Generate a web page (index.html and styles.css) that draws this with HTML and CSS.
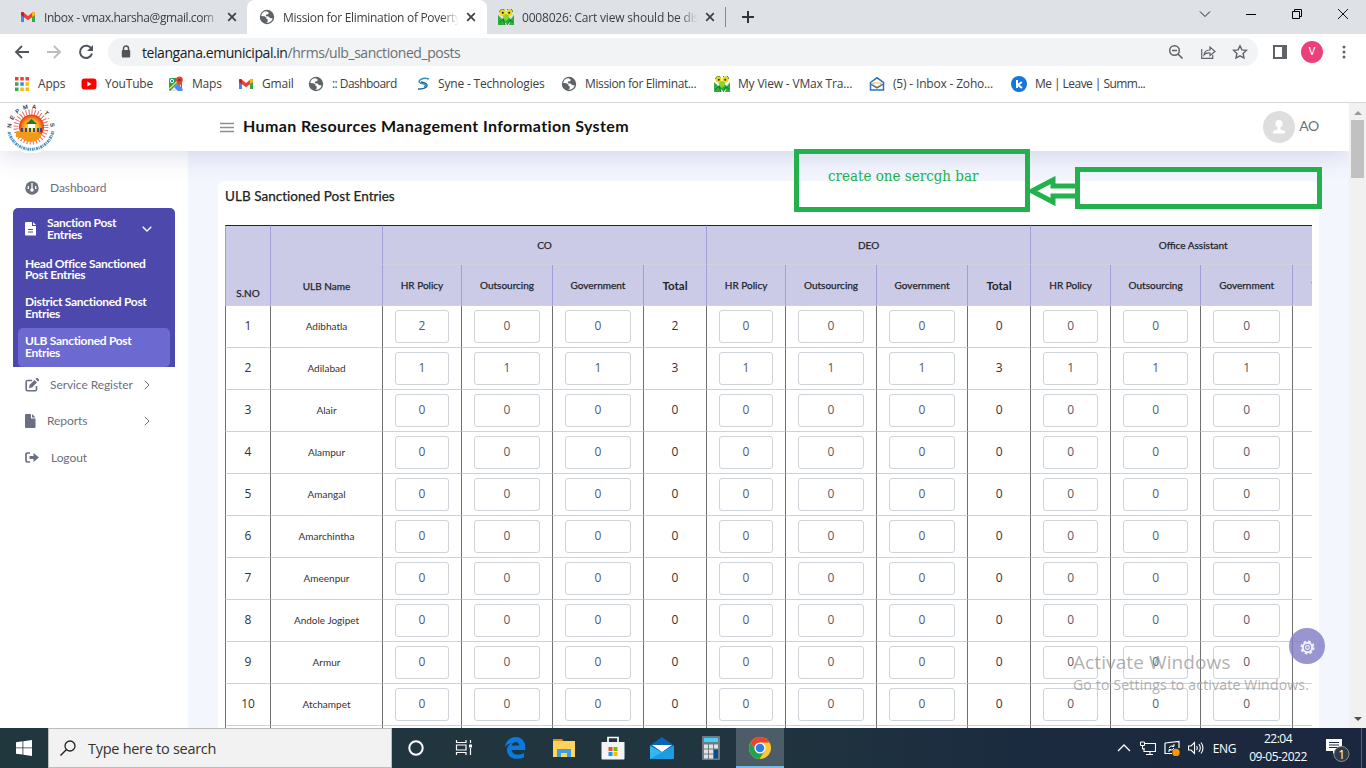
FILE: index.html
```html
<!DOCTYPE html>
<html lang="en">
<head>
<meta charset="utf-8">
<title>Human Resources Management Information System</title>
<link rel="stylesheet" href="styles.css">
</head>
<body>
<svg class="defs" width="0" height="0">
  <symbol id="gmail" viewBox="0 0 16 16"><path d="M1 4v9h3V6z" fill="#4285f4"/><path d="M12 6v7h3V4z" fill="#34a853"/><path d="M1 4.2Q1 2.5 3 3l5 4 5-4q2-.5 2 1.200V6l-7 5.200L1 6z" fill="#ea4335"/><path d="M12 4l1-1q2-.5 2 1.200V6l-3 2z" fill="#fbbc04"/><path d="M1 4.200Q1 2.500 3 3l1 .8V8L1 6z" fill="#c5221f"/></symbol>
  <symbol id="globe" viewBox="0 0 16 16"><circle cx="8" cy="8" r="7.200" fill="#5f6368"/><path d="M7.500 2.200C5 2 2.600 4 2.200 7l3.300.2 2.200 1.500-.4 1.300 1.500.3-.2 2.200-1.200 1.300c3 .4 5.500-1.600 6.300-4.300L11 9 9.500 7.500 7 7.200l-.2-1.400L9.500 5V3.200z" fill="#fff"/></symbol>
  <symbol id="mantis" viewBox="0 0 16 16"><path d="M0 6l4 4 3-2h3l3 2 3-4v10h-5l1-3-3 2-3-2 1 3H0z" fill="#2fae3a"/><path d="M4 5h8l-2 5-2 2-2-2z" fill="#8fd52b"/><path d="M1 14l4-4 2 6M15 13l-3-2-3 5" stroke="#0c7d36" fill="none"/><circle cx="4.500" cy="3.500" r="3" fill="#f2d90b"/><circle cx="11.500" cy="3.500" r="3" fill="#f2d90b"/><path d="M1.500 3a3 3 0 0 1 5-2M9 1a3 3 0 0 1 5.500 2" stroke="#4d9c22" fill="none"/><circle cx="4.800" cy="3.800" r="1" fill="#222"/><circle cx="11.200" cy="3.800" r="1" fill="#222"/></symbol>
  <symbol id="x" viewBox="0 0 10 10"><path d="M1.200 1.200l7.600 7.600M8.800 1.200L1.200 8.800" stroke="#3c4043" stroke-width="1.700"/></symbol>
</svg>

<header class="tabs">
  <div class="tab tab-first"><svg class="fav"><use href="#gmail"/></svg><span class="tab-title seg">Inbox - vmax.harsha@gmail.com</span><svg class="close"><use href="#x"/></svg></div>
  <div class="tab tab-active"><svg class="fav"><use href="#globe"/></svg><span class="tab-title seg">Mission for Elimination of Poverty</span><svg class="close"><use href="#x"/></svg></div>
  <div class="tab tab-third"><svg class="fav"><use href="#mantis"/></svg><span class="tab-title seg">0008026: Cart view should be dis</span><svg class="close"><use href="#x"/></svg></div>
  <svg class="plus" viewBox="0 0 12 12"><path d="M6 0v12M0 6h12" stroke="#333" stroke-width="2"/></svg>
  <div class="win">
    <svg viewBox="0 0 12 12"><path d="M1 3.500l5 5 5-5" fill="none" stroke="#222"/></svg>
    <svg viewBox="0 0 12 12"><path d="M1 6.500h10" stroke="#000"/></svg>
    <svg viewBox="0 0 12 12"><path d="M1.500 3.500h7v7h-7zM3.500 3.500v-2h7v7h-2" fill="none" stroke="#000"/></svg>
    <svg viewBox="0 0 12 12"><path d="M1 1l10 10M11 1L1 11" stroke="#111"/></svg>
  </div>
</header>

<div class="toolbar">
  <svg class="nav" viewBox="0 0 16 16"><path d="M15 8H2M8 2L2 8l6 6" fill="none" stroke="#50555a" stroke-width="1.800"/></svg>
  <svg class="nav" viewBox="0 0 16 16"><path d="M1 8h13M8 2l6 6-6 6" fill="none" stroke="#bbbdbf" stroke-width="1.800"/></svg>
  <svg class="nav" viewBox="0 0 16 16"><path d="M13.500 5A6.100 6.100 0 1 0 14 9.500" fill="none" stroke="#50555a" stroke-width="2"/><path d="M15 1v6H9z" fill="#50555a"/></svg>
  <div class="omni">
    <svg class="lock" viewBox="0 0 10 14"><path d="M2.500 6V3.500a2.500 2.500 0 0 1 5 0V6" fill="none" stroke="#50555a" stroke-width="1.500"/><rect x=".8" y="5" width="8.400" height="7.500" rx="1" fill="#50555a"/></svg>
    <span class="url seg"><b>telangana.emunicipal.in</b>/hrms/ulb_sanctioned_posts</span>
    <svg class="oi" viewBox="0 0 16 16"><circle cx="6.500" cy="6.500" r="4.800" fill="none" stroke="#5f6368" stroke-width="1.500"/><path d="M10 10l4.500 4.500M4 6.500h5" stroke="#5f6368" stroke-width="1.700"/></svg>
    <svg class="oi" viewBox="0 0 16 16"><path d="M1.700 5v9.300h11V11M4 11q.5-5 6-5V3l5 4.500-5 4V9Q6 8.500 4 11z" fill="none" stroke="#5f6368" stroke-width="1.200"/></svg>
    <svg class="oi" viewBox="0 0 16 16"><path d="M8 1.800l1.900 4.100 4.500.5-3.300 3.100.9 4.500L8 11.800 4 14l.9-4.500L1.600 6.400l4.500-.5z" fill="none" stroke="#5f6368" stroke-width="1.400"/></svg>
  </div>
  <svg class="side" viewBox="0 0 14 14"><path d="M1 1h12v12H1z" fill="#fff" stroke="#5f6368" stroke-width="2"/><path d="M9 0h5v14H9z" fill="#5f6368"/></svg>
  <span class="profile">V</span>
  <svg class="dots" viewBox="0 0 4 14"><circle cx="2" cy="2" r="1.500"/><circle cx="2" cy="7" r="1.500"/><circle cx="2" cy="12" r="1.500"/></svg>
</div>

<nav class="bookmarks seg">
  <a><svg viewBox="0 0 16 16"><path d="M1 1h3.500v3.500H1zM6.300 1h3.500v3.500H6.300zM11.500 1H15v3.500h-3.500z" fill="#ea4335"/><path d="M1 6.300h3.500v3.500H1z" fill="#34a853"/><path d="M6.300 6.300h3.500v3.500H6.300z" fill="#4285f4"/><path d="M11.500 6.300H15v3.500h-3.500zM11.500 11.500H15V15h-3.500zM6.300 11.500h3.500V15H6.300z" fill="#fbbc04"/><path d="M1 11.500h3.500V15H1z" fill="#34a853"/></svg>Apps</a>
  <a><svg viewBox="0 0 16 16"><rect x=".5" y="2.500" width="15" height="11" rx="3" fill="#f00"/><path d="M6.300 5.500v5l4.200-2.500z" fill="#fff"/></svg>YouTube</a>
  <a><svg viewBox="0 0 16 16"><rect x="1" y="2" width="13" height="13" rx="1.500" fill="#1fa15d"/><path d="M2 15L13 4v9q0 2-2 2z" fill="#dfe3e6"/><path d="M6 11l4-4 5 7-1 1h-4z" fill="#4c8bf5"/><path d="M1 13L13 2" stroke="#ffd24c" stroke-width="1.500"/><circle cx="4" cy="5" r="1.700" fill="none" stroke="#fff"/><path d="M11.500 10Q8 6 8.200 3.800a3.300 3.300 0 0 1 6.600 0Q15 6 11.500 10z" fill="#e84335"/><circle cx="11.500" cy="4" r="1.200" fill="#87271e"/></svg>Maps</a>
  <a><svg><use href="#gmail"/></svg>Gmail</a>
  <a class="tight"><svg><use href="#globe"/></svg>:: Dashboard</a>
  <a><svg viewBox="0 0 16 16"><path d="M13 3Q7 1 4 4t4 4q3 1 0 3" fill="none" stroke="#2b93b8" stroke-width="1.500"/><path d="M5 6q7 1 6 4t-9 3" fill="none" stroke="#275c91" stroke-width="1.300"/></svg><span class="syne">Syne - Technologies</span></a>
  <a class="mid"><svg><use href="#globe"/></svg>Mission for Eliminat...</a>
  <a><svg><use href="#mantis"/></svg>My View - VMax Tra...</a>
  <a><svg viewBox="0 0 16 16"><path d="M1.500 6.500L8 1.800l6.500 4.700v7.500h-13z" fill="#fff" stroke="#2f6fc0" stroke-width="1.500"/><path d="M4 7h8v2l-4 2-4-2z" fill="none" stroke="#f1b24a" stroke-width="1.200"/><path d="M1.500 8L8 12l6.500-4" fill="none" stroke="#2f6fc0" stroke-width="1.300"/></svg>(5) - Inbox - Zoho...</a>
  <a class="tight"><svg viewBox="0 0 16 16"><circle cx="8" cy="8" r="8" fill="#1476dc"/><path d="M6 4v8M10.800 6L7 9l4 3" fill="none" stroke="#fff" stroke-width="2"/></svg>Me | Leave | Summ...</a>
</nav>

<div class="viewport">
  <div class="app">
    <div class="topbar">
      <svg class="logo" viewBox="0 0 50 50">
        <circle cx="25" cy="26" r="24.500" fill="#fff"/>
        <circle cx="25" cy="24" r="15" fill="none" stroke="#f26a62" stroke-width="5" stroke-dasharray="1 1.950"/>
        <radialGradient id="sun"><stop offset=".2" stop-color="#ffe52e"/><stop offset=".65" stop-color="#fb9a1a"/><stop offset="1" stop-color="#e7321b"/></radialGradient>
        <circle cx="25.500" cy="24" r="12.500" fill="url(#sun)"/>
        <path d="M20 21l5.500-5 5.500 5z" fill="#187a35"/><path d="M22 21h7v4h-7z" fill="#fff"/>
        <path d="M16 29v-4M20 29v-4M24 29v-4M28 29v-4M32 29v-4M35 29v-4" stroke="#314a80" stroke-width="2"/>
        <path d="M10 29q10-1 17 1l9 1q-2 7-11 8-6 0-9-4l-6-1z" fill="#f09a19"/>
        <path d="M3 29a22.500 22.500 0 0 0 44-1" fill="none" stroke="#5294c9" stroke-width="3" stroke-dasharray="2 .6 1 .8"/>
        <path id="arc" d="M5.500 25a19.500 19.500 0 0 1 39 0" fill="none"/>
        <text class="logo-text"><textPath href="#arc" textLength="60">NEPMA.T.S</textPath></text>
      </svg>
      <svg class="burger" viewBox="0 0 14 11"><path d="M0 1.500h14M0 5.500h14M0 9.500h14" stroke="#8d8f94" stroke-width="1.500"/></svg>
      <h1>Human Resources Management Information System</h1>
      <svg class="avatar" viewBox="0 0 32 32"><circle cx="16" cy="16" r="16" fill="#dedede"/><circle cx="16" cy="12.500" r="3.600" fill="#fff"/><path d="M14.500 15h3v3.500l4.500 1.500v2.500H10V20l4.500-1.500z" fill="#fff"/></svg>
      <span class="user">AO</span>
    </div>
    <div class="body">
      <aside class="menu">
        <a class="item dash"><svg viewBox="0 0 14 14"><circle cx="7" cy="7" r="6.700" fill="#6b7080"/><path d="M7 2v6M3.300 5v3M10.700 5v3" stroke="#fff" stroke-width="1.300"/><circle cx="7" cy="9" r="1.800" fill="#fff"/></svg><span>Dashboard</span></a>
        <div class="group">
          <a class="ghead"><svg viewBox="0 0 11 14"><path d="M1 0h6v4h4v9.500H1q-1 0-1-1V1q0-1 1-1z" fill="#fff"/><path d="M8 0l3 3H8z" fill="#fff"/><path d="M3 7.500h5M3 10h5" stroke="#4d49ac"/></svg><span>Sanction Post<br>Entries</span><svg class="chev" viewBox="0 0 10 6"><path d="M.7.700L5 5 9.300.7" fill="none" stroke="#fff" stroke-width="1.300"/></svg></a>
          <a class="sub">Head Office Sanctioned<br>Post Entries</a>
          <a class="sub">District Sanctioned Post<br>Entries</a>
          <a class="sub sub-active">ULB Sanctioned Post<br>Entries</a>
        </div>
        <a class="item service"><svg viewBox="0 0 14 14"><path d="M7 2.500H2.500q-1.300 0-1.300 1.300v7.700q0 1.300 1.300 1.300h7.700q1.300 0 1.300-1.300V8" fill="none" stroke="#6b7080" stroke-width="1.600"/><path d="M4 10l.5-3 5-5 2.500 2.500-5 5zM10.500 1l1-1q.5-.3 1 0L14 1.500q.3.500 0 1l-1 1z" fill="#6b7080"/></svg><span>Service Register</span><svg class="arrow" viewBox="0 0 6 10"><path d="M.8.800L5 5 .8 9.200" fill="none" stroke="#6b7080"/></svg></a>
        <a class="item reports"><svg viewBox="0 0 14 14"><path d="M1 0h5v4.500h4.500V13q0 1-1 1H1q-1 0-1-1V1q0-1 1-1z" fill="#6b7080"/><path d="M7 0l3.500 3.500H7z" fill="#6b7080"/></svg><span>Reports</span><svg class="arrow" viewBox="0 0 6 10"><path d="M.8.800L5 5 .8 9.200" fill="none" stroke="#6b7080"/></svg></a>
        <a class="item logout"><svg viewBox="0 0 14 14"><path d="M5 2H2.200Q1 2 1 3.200v6.600Q1 11 2.200 11H5" fill="none" stroke="#6b7080" stroke-width="1.700"/><path d="M4.500 5h4V2L14 6.500 8.500 11V8h-4z" fill="#6b7080"/></svg><span>Logout</span></a>
      </aside>
      <main class="main">
        <section class="card">
          <h2>ULB Sanctioned Post Entries</h2>
          <div class="scroller">
            <table>
              <colgroup id="cols"></colgroup>
              <thead>
                <tr class="r1"><th rowspan="2" class="sno">S.NO</th><th rowspan="2" class="ulb">ULB Name</th><th colspan="4">CO</th><th colspan="4">DEO</th><th colspan="4">Office Assistant</th></tr>
                <tr class="r2" id="sub"></tr>
              </thead>
              <tbody id="rows"></tbody>
            </table>
          </div>
        </section>
      </main>
    </div>
  </div>
  <div class="scrollbar"><svg viewBox="0 0 8 4"><path d="M0 4l4-4 4 4z" fill="#999"/></svg><i></i><svg viewBox="0 0 8 4"><path d="M0 0l4 4 4-4z" fill="#505050"/></svg></div>
</div>

<div class="gear"><svg viewBox="0 0 16 16"><circle cx="8" cy="8" r="5" fill="none" stroke="#f2f2fb" stroke-width="2.200"/><circle cx="8" cy="8" r="6.600" fill="none" stroke="#f2f2fb" stroke-width="1.800" stroke-dasharray="2.800 2.380"/><circle cx="8" cy="8" r="2" fill="none" stroke="#f2f2fb" stroke-width="1.200"/></svg></div>
<div class="watermark seg"><p class="w1">Activate Windows</p><p class="w2">Go to Settings to activate Windows.</p></div>
<div class="note note-text">create one sercgh bar</div>
<div class="note note-empty"></div>
<svg class="note-arrow" viewBox="0 0 50 30"><path d="M48 10H26V4L5 15l21 11v-6h22" fill="none" stroke="#22b14c" stroke-width="5"/></svg>

<footer class="taskbar">
  <div class="start"><svg viewBox="0 0 16 16"><path d="M0 2.200l6.500-.9v6.200H0zM7.300 1.200L16 0v7.500H7.300zM0 8.300h6.500v6.300L0 13.700zM7.300 8.300H16V16l-8.700-1.200z" fill="#fff"/></svg></div>
  <div class="search seg"><svg viewBox="0 0 16 16"><circle cx="10" cy="6" r="5" fill="none" stroke="#222" stroke-width="1.300"/><path d="M6.500 9.500L.5 15.500" stroke="#222" stroke-width="1.400"/></svg>Type here to search</div>
  <div class="tasks">
    <span><svg viewBox="0 0 24 24"><circle cx="12" cy="12" r="6.700" fill="none" stroke="#fff" stroke-width="2"/></svg></span>
    <span class="tv"><svg viewBox="0 0 24 24"><path d="M4.500 4v2.500h9.500V4M4.500 19v-2.500h9.500V19M4.500 9h9.500v5H4.500zM18.500 4v3M18.500 12v7" fill="none" stroke="#fff" stroke-width="1.200"/><path d="M17 8.500h3v3h-3z" fill="#fff"/></svg></span>
    <span><svg viewBox="0 0 24 24"><path d="M2 11C3 5 7 1 12.500 1 19 1 22.500 6 22.300 11v3H8.500c.5 5 7.500 6 12.500 3v4.300C13 25 4 22 4 14c0-3 2-6 5-7-4 .3-6 3-7 4zm6.700-1.500h7.600C16 4.800 9.500 4.800 8.700 9.500z" fill="#0a7bdc"/></svg></span>
    <span><svg viewBox="0 0 24 24"><path d="M1 3h9l1.500 2H1z" fill="#dc9400"/><path d="M1 5h22v16H1z" fill="#ffd35c"/><path d="M5 21v-8h14v8h-4v-4H9v4z" fill="#3f9de0"/></svg></span>
    <span><svg viewBox="0 0 24 24"><path d="M7 7V1.500h10V7" fill="none" stroke="#fff" stroke-width="1.700"/><path d="M.5 6h23v16.500q0 1-1 1h-21q-1 0-1-1z" fill="#f4f4f4"/><path d="M7.500 11h4v4h-4z" fill="#f25022"/><path d="M12.500 11h4v4h-4z" fill="#7fba00"/><path d="M7.500 16h4v4h-4z" fill="#00a4ef"/><path d="M12.500 16h4v4h-4z" fill="#ffb900"/></svg></span>
    <span><svg viewBox="0 0 24 24"><path d="M0 9.500L12 1l12 8.500-12 8z" fill="#0964b5"/><path d="M2 9h20l-10 7z" fill="#fff"/><path d="M0 9.500l12 7 12-7V23H0z" fill="#32b8f0"/><path d="M0 23L24 9.500V23z" fill="#1d9ce3"/></svg></span>
    <span><svg viewBox="0 0 24 24"><rect x="3" y="0" width="18" height="24" rx="1" fill="#6f7a84"/><path d="M5 2h14v4H5z" fill="#42d2f5"/><path d="M5 8.500h4v4H5zM10 8.500h4v4h-4zM15 8.500h4v4h-4zM5 13.500h4v4H5zM10 13.500h4v4h-4zM5 18.500h4v4H5zM10 18.500h4v4h-4z" fill="#e0e2e4"/><path d="M15 13.500h4v9h-4z" fill="#114a8b"/></svg></span>
    <span class="on"><svg viewBox="0 0 24 24"><circle cx="12" cy="12" r="11" fill="#fcc934"/><path d="M2.500 6.500A11 11 0 0 1 21.500 6.500H12L8 14z" fill="#ea4335"/><path d="M2.500 6.500A11 11 0 0 0 11.500 23l5-8-8-.5z" fill="#26a04b"/><circle cx="12" cy="12" r="5.600" fill="#fff"/><circle cx="12" cy="12" r="4.300" fill="#2b7de9"/></svg></span>
  </div>
  <div class="tray seg">
    <svg viewBox="0 0 16 16"><path d="M2 11l6-6 6 6" fill="none" stroke="#fff" stroke-width="1.300"/></svg>
    <svg viewBox="0 0 16 16"><path d="M5 3.500h10.500v8H4V8M10 11.500v3M6 14.500h7" fill="none" stroke="#fff" stroke-width="1.100"/><path d="M.5 2h4v3.500h-4zM2.500 5.500V9h2" fill="none" stroke="#fff"/></svg>
    <svg viewBox="0 0 16 16"><path d="M1 3l14-1.500V8M1 3v10.500h7" fill="none" stroke="#fff" stroke-width="1.200"/><path d="M5 8q1-3 5-2M10 4v2.500H8M10 8q-1 3-5 2M5 12V9.500h2" fill="none" stroke="#fff"/><circle cx="12" cy="12.500" r="3.700" fill="#ff9500"/></svg>
    <svg viewBox="0 0 16 16"><path d="M.5 6h2.500l3.500-3.500v11L3 10H.5zM8.500 6q1.500 2 0 4M10.800 4q3 4 0 8M13 2.500q4 5.500 0 11" fill="none" stroke="#fff" stroke-width="1.100"/></svg>
    <span class="lang">ENG</span>
    <span class="clock"><b>22:04</b><b>09-05-2022</b></span>
    <svg class="notif" viewBox="0 0 26 26"><path d="M1 2h16v12h-6l-3 3v-3H1z" fill="#fff"/><path d="M4 5.500h10M4 8h10M4 10.500h10" stroke="#1c2b40"/><circle cx="16.500" cy="17" r="7.500" fill="#333b42" stroke="#8a9096"/><text x="13.200" y="21.500" class="badge">1</text></svg>
  </div>
</footer>
<script src="app.js"></script>
</body>
</html>
```

FILE: styles.css
```css
* { box-sizing: border-box; }
body { margin: 0; width: 1366px; height: 768px; overflow: hidden; position: relative; display: flex; flex-direction: column; background: #fff; font-family: Lato, sans-serif; }
h1, h2, p { margin: 0; }
svg { display: block; flex: none; }
.defs { position: absolute; }
.seg { font-family: "Open Sans", sans-serif; }

/* browser tabs */
.tabs { height: 34px; background: #dee1e6; display: flex; align-items: center; flex: none; }
.tab { height: 34px; display: flex; align-items: center; padding: 0 9px 0 12px; width: 240px; }
.tab-first { width: 247px; padding-left: 20px; padding-right: 10px; }
.tab-active { background: #fff; border-radius: 8px 8px 0 0; padding-right: 11px; }
.tab-third { width: 239px; padding-left: 11px; padding-right: 10px; border-right: 1px solid #85888d; height: 20px; }
.fav { width: 16px; height: 16px; }
.tab-title { flex: 1; margin: 0 7px 0 8px; overflow: hidden; white-space: nowrap; font-size: 12px; letter-spacing: -0.42px; color: #3c4043; -webkit-mask-image: linear-gradient(90deg, #000 90%, transparent); mask-image: linear-gradient(90deg, #000 90%, transparent); }
.tab-active .tab-title { letter-spacing: -0.3px; }
.tab-third .tab-title { letter-spacing: -0.2px; }
.close { width: 10px; height: 10px; }
.plus { width: 12px; height: 12px; margin-left: 16px; }
.win { margin-left: auto; display: flex; gap: 34px; padding: 0 17px 6px 0; }
.win svg { width: 12px; height: 12px; }

/* address bar */
.toolbar { height: 36px; flex: none; display: flex; align-items: center; padding-left: 14px; }
.nav { width: 16px; height: 16px; margin-right: 16px; }
.omni { width: 1150px; height: 28px; margin-left: -2px; border-radius: 14px; background: #f1f3f4; display: flex; align-items: center; padding: 0 10px 0 13px; }
.lock { width: 10px; height: 14px; margin-right: 11px; }
.url { flex: 1; font-size: 14px; letter-spacing: -0.44px; color: #6b6f74; }
.url b { font-weight: 400; color: #202124; }
.oi { width: 16px; height: 16px; margin-left: 16px; }
.side { width: 14px; height: 14px; margin-left: 15px; }
.profile { width: 22px; height: 22px; margin-left: 14px; border-radius: 50%; background: #ec407a; color: #fff; font: 11px/22px Roboto, sans-serif; text-align: center; }
.dots { width: 4px; height: 14px; margin-left: 19px; fill: #5f6368; }

/* bookmarks */
.bookmarks { height: 33px; flex: none; border-bottom: 1px solid #d5d7da; display: grid; grid-template-columns: 67px 87px 70px 70px 108px 145px 153px 155px 142px 200px; padding: 0 0 5px 14px; align-items: center; font-size: 12px; letter-spacing: -0.18px; color: #3c4043; white-space: nowrap; }
.bookmarks a { display: flex; align-items: center; gap: 8px; }
.bookmarks svg { width: 16px; height: 16px; }
.bookmarks .mid { letter-spacing: -0.38px; }
.bookmarks .tight { letter-spacing: -0.55px; }
.syne { margin-left: -2px; }

/* page */
.viewport { height: 625px; flex: none; display: flex; }
.app { width: 1349px; flex: none; display: flex; flex-direction: column; overflow: hidden; }
.topbar { height: 48px; flex: none; background: #fff; display: flex; align-items: center; box-shadow: 0 4px 26px rgba(70, 80, 150, .2); position: relative; z-index: 1; padding-left: 6px; }
.logo { width: 50px; height: 50px; margin-top: 2px; }
.logo-text { font: bold 6px "Liberation Sans", sans-serif; fill: #444; }
.burger { width: 14px; height: 11px; margin: 1px 9px 0 164px; }
h1 { font-size: 16px; font-weight: 700; letter-spacing: 0.38px; color: #111; white-space: nowrap; padding-bottom: 3px; }
.avatar { width: 32px; height: 32px; margin-left: auto; }
.user { font-size: 14px; letter-spacing: -.3px; color: #6b7080; margin: -4px 30px 0 4px; }
.body { height: 577px; display: flex; }
.menu { width: 188px; flex: none; background: #fff; padding: 18px 13px 0; color: #6b7080; font-size: 12px; }
.item { display: grid; grid-template-columns: 25px 92px auto; align-items: center; height: 36px; padding-left: 12px; letter-spacing: -.08px; }
.item span { padding-bottom: 2px; }
.item svg { width: 14px; height: 14px; }
.item .arrow, .arrow { width: 6px !important; height: 10px !important; margin-left: 2px; }
.dash { height: 39px; padding-bottom: 2px; }
.dash span { padding: 0; }
.reports { grid-template-columns: 22px 95px auto; }
.logout { grid-template-columns: 26px auto; height: 38px; }
.group { background: #4d49ac; border-radius: 5px 5px 0 0; color: #fff; line-height: 11.500px; font-weight: 700; letter-spacing: -0.3px; padding: 0 5px; }
.ghead { display: flex; align-items: center; height: 43px; padding: 0 18px 2px 7px; }
.ghead > svg:first-child { width: 11px; height: 14px; margin-right: 11px; }
.ghead span { flex: 1; }
.chev { width: 10px; height: 6px; }
.sub { display: flex; align-items: center; height: 39px; padding: 0 0 2px 7px; white-space: nowrap; }
.sub:nth-child(2) { height: 38px; }
.sub-active { background: #6c69d0; border-radius: 5px; }
.main { flex: 1; min-width: 0; background: #f3f6fd; padding: 30px 30px 0; }
.card { height: 560px; background: #fff; border-radius: 6px; padding: 0 7px; }
h2 { height: 44px; font-size: 13.500px; font-weight: 400; -webkit-text-stroke: .25px #222; line-height: 31px; color: #222; letter-spacing: .03px; }
.scroller { overflow: hidden; height: 520px; }

/* table */
table { table-layout: fixed; border-collapse: separate; border-spacing: 0; width: 1130px; }
th, td { padding: 0; text-align: center; vertical-align: middle; border-left: 1px solid #707070; border-bottom: 1px solid #cfd1d6; }
th { background: #cccbe7; border-left-color: #a19dd8; font-size: 10px; font-weight: 400; -webkit-text-stroke: .25px #212529; color: #212529; }
.r1 { height: 40px; }
.r1 th { border-top: 1px solid #222; }
.r2 { height: 41px; }
.r1 .sno { padding-top: 54px; }
.r1 .ulb { padding-top: 40px; }
.r2 .total { font-size: 11.500px; font-weight: 700; -webkit-text-stroke: 0; }
tbody tr { height: 42px; }
td { font: 12px "Open Sans", sans-serif; color: #333; padding-bottom: 2px; }
td.name { font: 10px Lato, sans-serif; color: #333; padding: 0 0 1px; }
td.cell { padding: 0 12px; }
.box { height: 33px; border: 1px solid #ced4da; border-radius: 3px; line-height: 30px; color: #555b62; }

.scrollbar { width: 17px; background: #f1f1f1; display: flex; flex-direction: column; align-items: center; padding: 8px 0 7px; }
.scrollbar svg { width: 8px; height: 4px; }
.scrollbar i { width: 13px; height: 58px; background: #c1c1c1; margin: 5px 0 auto; }

/* floating elements above the page */
.gear { position: absolute; left: 1289px; top: 628px; width: 36px; height: 36px; border-radius: 50%; background: rgba(130, 126, 198, .82); display: flex; align-items: center; justify-content: center; padding-top: 3px; z-index: 2; }
.gear svg { width: 15px; height: 15px; }
.watermark { position: absolute; left: 1073px; top: 649px; color: rgba(150, 150, 150, .75); white-space: nowrap; z-index: 3; }
.w1 { font-size: 19px; line-height: 26px; letter-spacing: .1px; }
.w2 { font-size: 14px; line-height: 20px; letter-spacing: .19px; }
.note { position: absolute; border: 5px solid #22b14c; z-index: 4; }
.note-text { left: 794px; top: 149px; width: 236px; height: 63px; padding: 12px 0 0 29px; font: 15px/20px "DejaVu Serif Condensed", "DejaVu Serif", serif; color: #22b14c; white-space: nowrap; }
.note-empty { left: 1075px; top: 167px; width: 247px; height: 42px; }
.note-arrow { position: absolute; left: 1027px; top: 176px; width: 50px; height: 30px; z-index: 5; }

/* taskbar */
.taskbar { height: 40px; flex: none; background: linear-gradient(90deg, #20373e, #20353f 55%, #1b2b3f 75%, #1b273e); display: flex; position: relative; z-index: 1; }
.start { width: 48px; display: flex; align-items: center; justify-content: center; }
.start svg { width: 16px; height: 16px; }
.search { width: 344px; background: #f2f2f2; border: 1px solid #b9bcbd; display: flex; align-items: center; gap: 12px; padding-left: 11px; font-size: 14.500px; color: #333; letter-spacing: -.28px; }
.search svg { width: 16px; height: 16px; }
.tasks { display: flex; gap: 1px; }
.tasks span { width: 48px; height: 40px; display: flex; align-items: center; justify-content: center; }
.tasks svg { width: 24px; height: 24px; }
.tasks .tv { margin: 0 2px 0 -1px; }
.tasks .on { background: #4c5d68; border-bottom: 2px solid #76b9ed; }
.tasks .on svg { margin-top: 2px; }
.tray { margin-left: auto; display: flex; align-items: center; gap: 8px; color: #fff; font-size: 12px; margin-right: 4px; border-right: 1px solid #59636f; padding-right: 10px; }
.tray > svg { width: 16px; height: 16px; }
.lang { margin-left: 1px; letter-spacing: -.4px; }
.clock { width: 62px; margin-left: 3px; line-height: 18px; text-align: center; letter-spacing: -.5px; }
.clock b { display: block; font-weight: 400; }
.tray .notif { width: 26px; height: 26px; margin: 3px 0 0 8px; }
.badge { font: 12px "Open Sans", sans-serif; fill: #fff; }
```

FILE: app.js
```js
const names = ["Adibhatla", "Adilabad", "Alair", "Alampur", "Amangal", "Amarchintha", "Ameenpur", "Andole Jogipet", "Armur", "Atchampet", ""];
const counts = { 0: [2, 0, 0, 2, 0, 0, 0, 0, 0, 0, 0, 0], 1: [1, 1, 1, 3, 1, 1, 1, 3, 1, 1, 1, 3] };
const widths = [45, 112, 79, 91, 91, 63, 79, 91, 91, 63, 80, 90, 92, 63];

document.getElementById("cols").innerHTML = widths.map(w => `<col style="width:${w}px">`).join("");
document.getElementById("sub").innerHTML =
  "<th>HR Policy</th><th>Outsourcing</th><th>Government</th><th class='total'>Total</th>".repeat(3);
document.getElementById("rows").innerHTML = names.map((name, r) => {
  const values = name ? counts[r] || Array(12).fill(0) : Array(12).fill("");
  // the last total column lies past the visible edge of the scroller
  const cells = values.map((v, i) => i % 4 === 3
    ? `<td>${i === 11 ? "" : v}</td>`
    : `<td class="cell">${name ? `<div class="box">${v}</div>` : ""}</td>`).join("");
  return `<tr><td>${name ? r + 1 : ""}</td><td class="name">${name}</td>${cells}</tr>`;
}).join("");
```
